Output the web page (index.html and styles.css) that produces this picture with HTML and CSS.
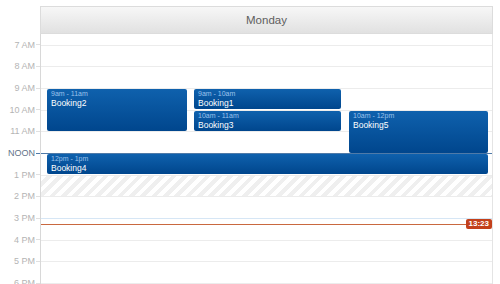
FILE: index.html
```html
<!DOCTYPE html>
<html lang="en">
<head>
    <meta charset="UTF-8">
    <title>Day view</title>
    <link rel="stylesheet" href="styles.css">
</head>
<body>
    <div class="calendar">
        <div class="corner"></div>
        <div class="day-header">Monday</div>

        <div class="times">
            <div class="time"><span>7 AM</span><i class="tick"></i></div>
            <div class="time"><span>8 AM</span><i class="tick"></i></div>
            <div class="time"><span>9 AM</span><i class="tick"></i></div>
            <div class="time"><span>10 AM</span><i class="tick"></i></div>
            <div class="time"><span>11 AM</span><i class="tick"></i></div>
            <div class="time noon"><span>NOON</span><i class="tick"></i></div>
            <div class="time"><span>1 PM</span><i class="tick"></i></div>
            <div class="time"><span>2 PM</span><i class="tick"></i></div>
            <div class="time"><span>3 PM</span><i class="tick"></i></div>
            <div class="time"><span>4 PM</span><i class="tick"></i></div>
            <div class="time"><span>5 PM</span><i class="tick"></i></div>
            <div class="time"><span>6 PM</span><i class="tick"></i></div>
        </div>

        <div class="day">
            <div class="half"></div>
            <div class="hour"></div>
            <div class="hour"></div>
            <div class="hour"></div>
            <div class="hour"></div>
            <div class="hour"></div>
            <div class="hour noon"></div>
            <div class="hour blocked"></div>
            <div class="hour"></div>
            <div class="hour current"></div>
            <div class="hour"></div>
            <div class="hour"></div>
            <div class="hour"></div>

            <!-- bookings, placed by start time and length -->
            <div class="booking" style="top: 54.8px; height: 42.3px; left: 6px; width: 140px;">
                <div class="when">9am - 11am</div>
                <div class="what">Booking2</div>
            </div>
            <div class="booking" style="top: 54.8px; height: 20.7px; left: 153px; width: 147px;">
                <div class="when">9am - 10am</div>
                <div class="what">Booking1</div>
            </div>
            <div class="booking" style="top: 76.5px; height: 20.7px; left: 153px; width: 147px;">
                <div class="when">10am - 11am</div>
                <div class="what">Booking3</div>
            </div>
            <div class="booking" style="top: 76.5px; height: 42.3px; left: 308px; width: 139px;">
                <div class="when">10am - 12pm</div>
                <div class="what">Booking5</div>
            </div>
            <div class="booking" style="top: 119.8px; height: 20.7px; left: 6px; width: 441px;">
                <div class="when">12pm - 1pm</div>
                <div class="what">Booking4</div>
            </div>

            <div class="now" style="top: 190px;"><span class="now-badge">13:23</span></div>
        </div>
    </div>
</body>
</html>
```

FILE: styles.css
```css
html, body {
    margin: 0;
    overflow: hidden;
    background: #fff;
}
body {
    font-family: "Liberation Sans", Arial, sans-serif;
    padding-top: 6px;
}
.calendar {
    display: grid;
    grid-template-columns: 40px 453px;
}
.day-header {
    height: 26px;
    line-height: 26px;
    text-align: center;
    font-size: 11.5px;
    color: #5e5e5e;
    border: 1px solid #dcdcdc;
    background: linear-gradient(#f7f7f7, #e1e1e1);
    width: 451px;
}
.times {
    display: flex;
    flex-direction: column;
}
.time {
    height: 21.67px;
    display: flex;
    align-items: center;
    justify-content: flex-end;
    font-size: 9px;
    color: #b4b4b4;
}
.time span {
    margin-right: 1px;
}
.time.noon {
    color: #5f7388;
}
.tick {
    width: 4px;
    height: 1px;
    background: #e0e0e0;
}
.time.noon .tick {
    background: #4f7aa8;
}
.day {
    position: relative;
    border-left: 1px solid #d8d8d8;
    border-right: 1px solid #e4e4e4;
}
.half {
    height: 10.83px;
}
.hour {
    height: 21.67px;
    box-sizing: border-box;
    border-top: 1px solid #ececec;
}
.hour.noon {
    border-top-color: #4f7aa8;
}
.hour.current {
    border-top-color: #d6e6f5;
}
.hour.blocked {
    background: repeating-linear-gradient(135deg, #fff 0, #fff 4px, #efefef 4px, #efefef 8px);
}
.booking {
    position: absolute;
    box-sizing: border-box;
    padding: 1px 4px;
    border-radius: 2px;
    background: linear-gradient(#0f61ad, #00468d);
    color: #fff;
    overflow: hidden;
}
.when {
    font-size: 7px;
    line-height: 8px;
    color: #9cc3ec;
}
.what {
    font-size: 8.5px;
    line-height: 10px;
}
.now {
    position: absolute;
    left: 0;
    right: 0;
    height: 1px;
    background: #c9683f;
}
.now-badge {
    position: absolute;
    right: 0;
    top: -5px;
    padding: 0 3px;
    height: 10px;
    line-height: 10px;
    border-radius: 2px;
    background: #c3401b;
    color: #fff;
    font-size: 8px;
    font-weight: bold;
}
```
